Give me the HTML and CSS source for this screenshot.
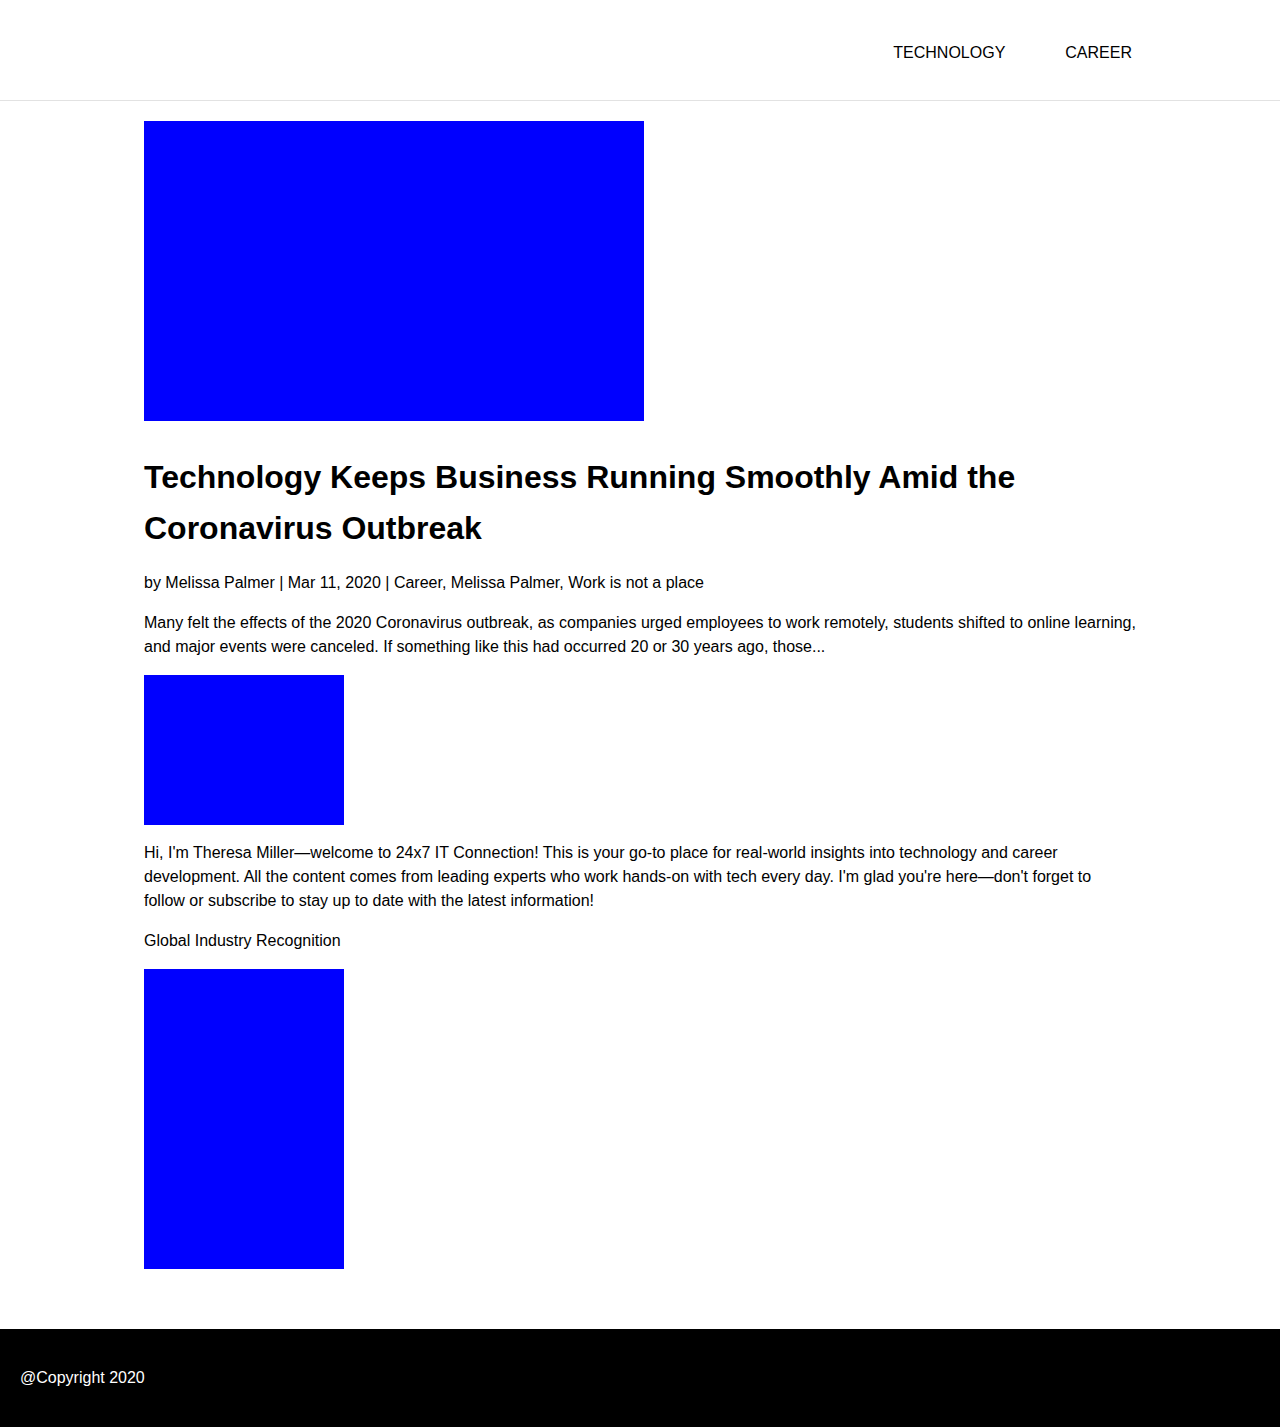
FILE: index.html
```html
<!DOCTYPE html>
<html lang="en">
<head>
<meta charset="utf-8">
<title>24x7 IT Connection</title>
<link rel="stylesheet" href="styles.css">
</head>
<body>
<header class="site-header">
  <nav class="nav">
    <a class="nav-link" href="#">TECHNOLOGY</a>
    <a class="nav-link" href="#">CAREER</a>
  </nav>
</header>
<main class="content">
  <div class="hero-img"></div>
  <h1 class="title">Technology Keeps Business Running Smoothly Amid the Coronavirus Outbreak</h1>
  <p class="meta">by Melissa Palmer | Mar 11, 2020 | Career, Melissa Palmer, Work is not a place</p>
  <p class="excerpt">Many felt the effects of the 2020 Coronavirus outbreak, as companies urged employees to work remotely, students shifted to online learning, and major events were canceled. If something like this had occurred 20 or 30 years ago, those...</p>
  <div class="author-img"></div>
  <p class="bio">Hi, I'm Theresa Miller—welcome to 24x7 IT Connection! This is your go-to place for real-world insights into technology and career development. All the content comes from leading experts who work hands-on with tech every day. I'm glad you're here—don't forget to follow or subscribe to stay up to date with the latest information!</p>
  <p class="label">Global Industry Recognition</p>
  <div class="badge-img"></div>
</main>
<footer class="site-footer">
  <p class="copyright">@Copyright 2020</p>
</footer>
</body>
</html>
```
FILE: styles.css
```css
* { box-sizing: border-box; }
html, body { margin: 0; padding: 0; }
body {
  font-family: "Liberation Sans", Arial, sans-serif;
  font-size: 16px;
  line-height: 24px;
  color: #000;
  background: #fff;
}
.site-header {
  height: 101px;
  border-bottom: 1px solid #e2e2e2;
  display: flex;
  align-items: center;
  justify-content: flex-end;
  padding: 6px 148px 0 0;
}
.nav {
  display: flex;
  gap: 60px;
}
.nav-link {
  color: #000;
  text-decoration: none;
  font-size: 16px;
}
.content {
  max-width: 992px;
  margin: 0 auto;
  padding: 20px 0 60px;
}
.hero-img {
  width: 500px;
  height: 300px;
  background: #0000ff;
}
.title {
  font-size: 32px;
  line-height: 51px;
  font-weight: 700;
  margin: 31px 0 17px;
}
.meta, .excerpt, .bio, .label, .copyright {
  margin: 0;
}
.meta { margin-bottom: 16px; }
.excerpt { margin-bottom: 16px; }
.author-img {
  width: 200px;
  height: 150px;
  background: #0000ff;
  margin-bottom: 16px;
}
.bio { margin-bottom: 16px; }
.label { margin-bottom: 16px; }
.badge-img {
  width: 200px;
  height: 300px;
  background: #0000ff;
}
.site-footer {
  background: #000;
  color: #fff;
  padding: 37px 20px;
}
```
